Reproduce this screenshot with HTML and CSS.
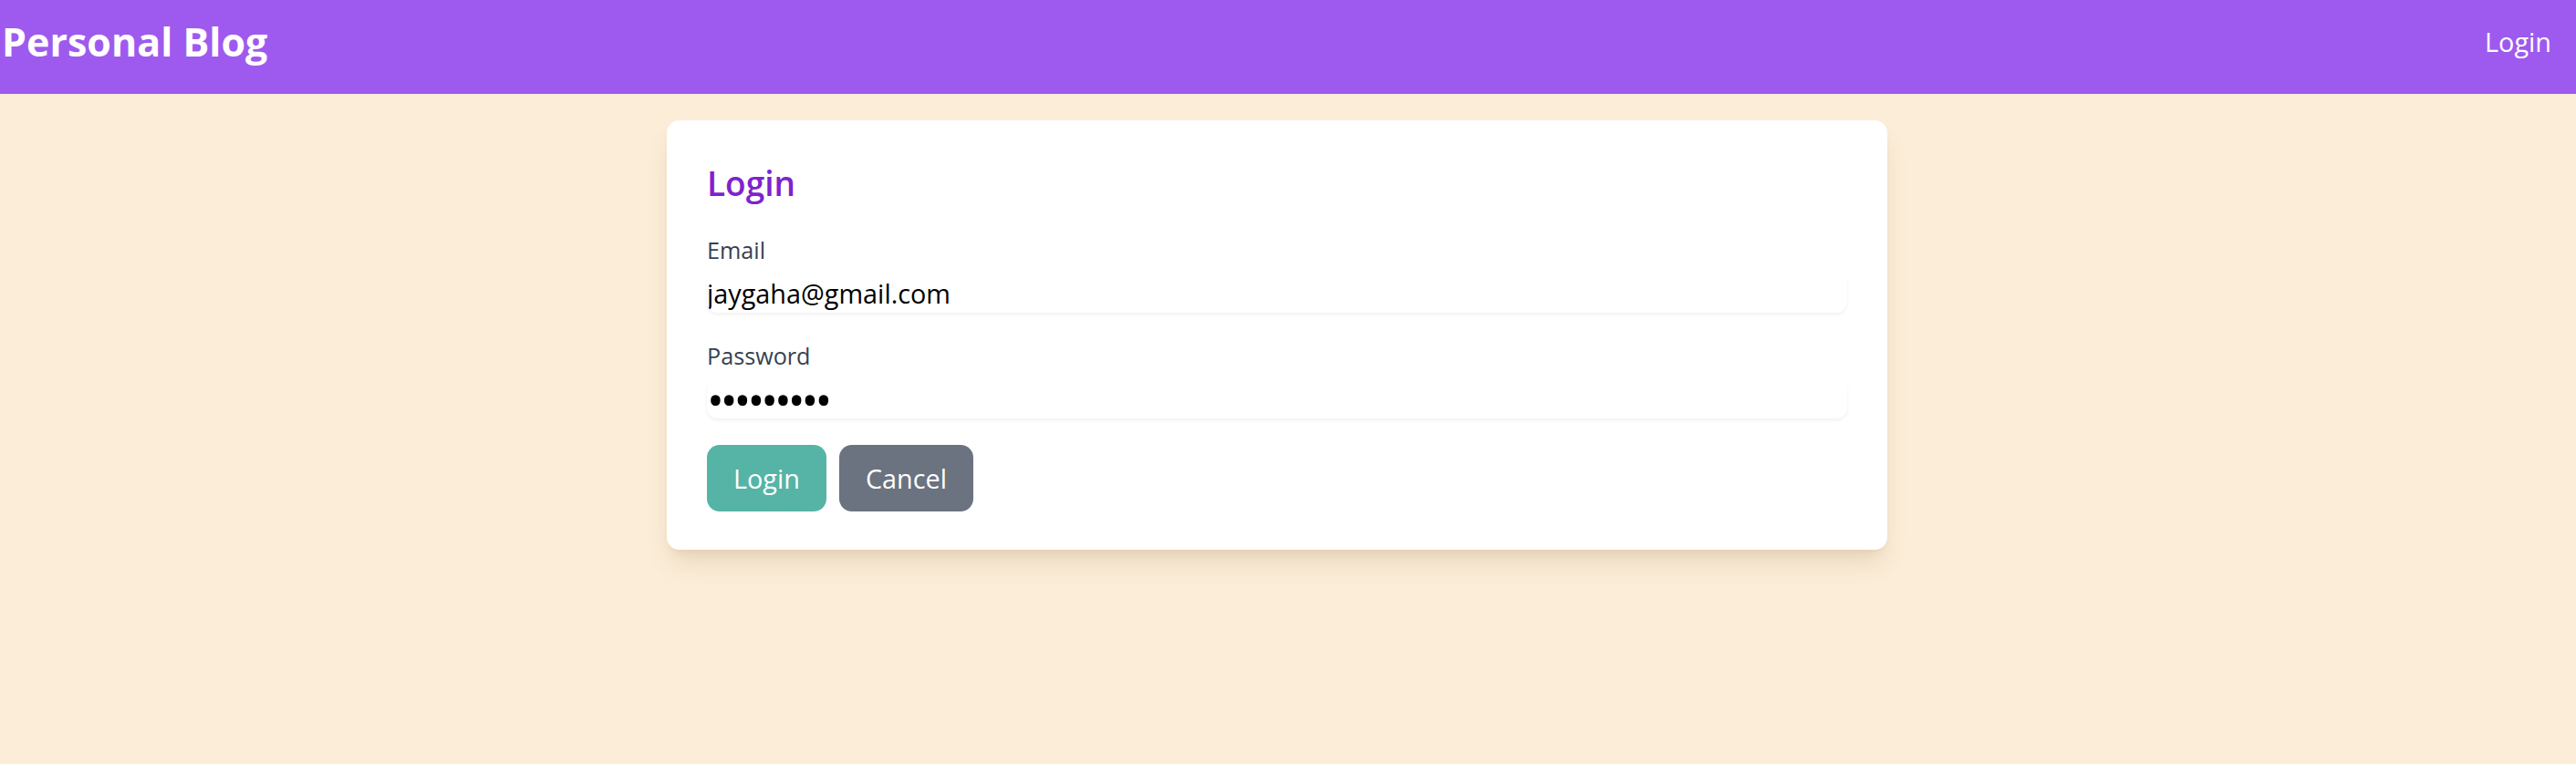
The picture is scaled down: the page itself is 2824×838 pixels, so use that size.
FILE: index.html
```html
<!DOCTYPE html>
<html lang="en">
<head>
<meta charset="utf-8">
<title>Personal Blog</title>
<link rel="stylesheet" href="styles.css">
</head>
<body>
<header class="topbar">
  <a class="brand" href="#">Personal Blog</a>
  <nav class="nav"><a class="nav-link" href="#">Login</a></nav>
</header>
<main class="main">
  <section class="card">
    <h2 class="card-title">Login</h2>
    <form class="form">
      <div class="field">
        <label class="label" for="email">Email</label>
        <input class="input" id="email" type="email" value="jaygaha@gmail.com">
      </div>
      <div class="field">
        <label class="label" for="password">Password</label>
        <input class="input input-pass" id="password" type="password" value="123456789">
      </div>
      <div class="actions">
        <button type="submit" class="btn btn-primary">Login</button>
        <button type="button" class="btn btn-secondary">Cancel</button>
      </div>
    </form>
  </section>
</main>
</body>
</html>
```
FILE: styles.css
```css
* { box-sizing: border-box; }
html, body { margin: 0; padding: 0; }
body {
  background: #fcedd8;
  font-family: "Open Sans", "Liberation Sans", sans-serif;
  color: #111;
  min-height: 838px;
}
.topbar {
  height: 103px;
  background: #9e5aee;
  display: flex;
  align-items: center;
  justify-content: space-between;
  padding: 0 27px 12px 2px;
}
.brand {
  color: #fff;
  text-decoration: none;
  font-weight: 700;
  font-size: 43px;
  line-height: 58px;
}
.nav-link {
  color: #fff;
  text-decoration: none;
  font-size: 28.8px;
  line-height: 43px;
}
.main {
  display: flex;
  justify-content: center;
  padding: 29px 24px 0 0;
}
.card {
  width: 1338px;
  background: #fff;
  border-radius: 14px;
  padding: 43px 44px 42px;
  box-shadow: 0 18px 27px -5px rgba(120, 90, 40, 0.15), 0 7px 11px -7px rgba(120, 90, 40, 0.15);
}
.card-title {
  margin: 0 0 29px;
  color: #7e22ce;
  font-size: 37px;
  font-weight: 600;
  line-height: 52px;
}
.form { display: flex; flex-direction: column; }
.field { display: flex; flex-direction: column; margin-bottom: 29px; }
.label {
  color: #374151;
  font-size: 25.2px;
  line-height: 36px;
  margin-bottom: 8px;
}
.input {
  font-family: inherit;
  font-size: 28.8px;
  line-height: 43px;
  height: 43px;
  padding: 0;
  border: 0;
  outline: none;
  background: #fff;
  color: #000;
  border-radius: 12px;
  box-shadow: 0 2px 4px rgba(0, 0, 0, 0.06);
}
.input-pass {
  font-size: 50px;
  letter-spacing: -4px;
  line-height: 43px;
}
.actions { display: flex; gap: 14px; }
.btn {
  font-family: inherit;
  font-size: 28.8px;
  line-height: 43px;
  padding: 15px 29px;
  border: 0;
  border-radius: 14px;
  color: #fff;
  cursor: pointer;
}
.btn-primary { background: #55b4a6; }
.btn-secondary { background: #6b7280; }
```
